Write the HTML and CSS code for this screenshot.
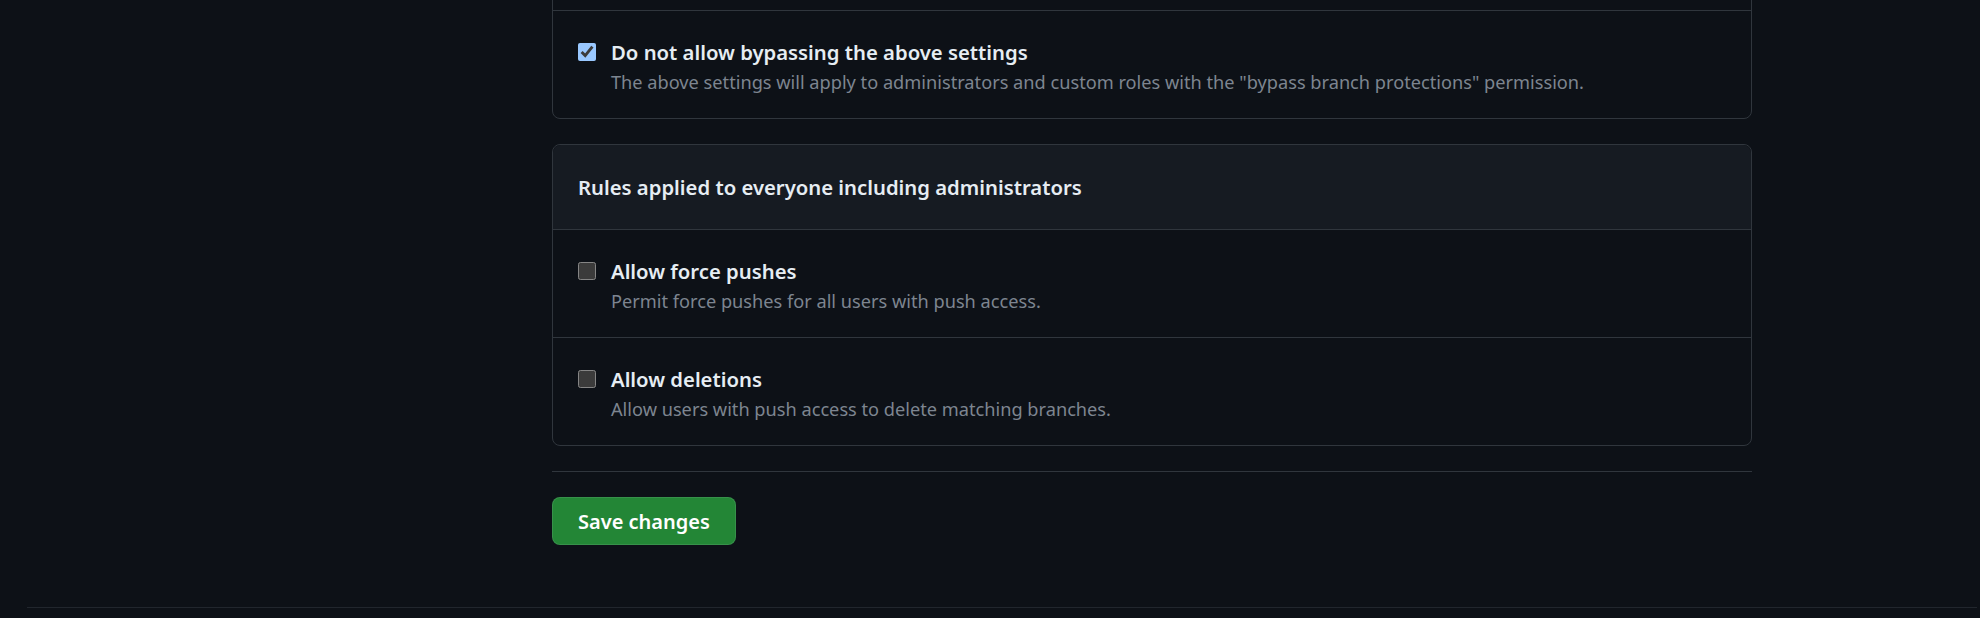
FILE: index.html
```html
<!DOCTYPE html>
<html lang="en">
<head>
<meta charset="utf-8">
<title>Branch protection rule</title>
<link rel="stylesheet" href="styles.css">
</head>
<body>
<div class="layout">
  <aside class="sidebar"></aside>
  <main class="main">
    <section class="box">
      <div class="box-row box-row-prev"></div>
      <div class="box-row">
        <label class="check">
          <input class="check-input" type="checkbox" checked>
          <span class="check-body">
            <span class="check-title">Do not allow bypassing the above settings</span>
            <span class="note">The above settings will apply to administrators and custom roles with the "bypass branch protections" permission.</span>
          </span>
        </label>
      </div>
    </section>

    <section class="box box-spaced">
      <div class="box-header">Rules applied to everyone including administrators</div>
      <div class="box-row">
        <label class="check">
          <input class="check-input" type="checkbox">
          <span class="check-body">
            <span class="check-title">Allow force pushes</span>
            <span class="note">Permit force pushes for all users with push access.</span>
          </span>
        </label>
      </div>
      <div class="box-row">
        <label class="check">
          <input class="check-input" type="checkbox">
          <span class="check-body">
            <span class="check-title">Allow deletions</span>
            <span class="note">Allow users with push access to delete matching branches.</span>
          </span>
        </label>
      </div>
    </section>

    <hr class="divider">
    <button class="btn-primary" type="button">Save changes</button>
  </main>
</div>
<footer class="footer"></footer>
</body>
</html>
```

FILE: styles.css
```css
html, body {
  margin: 0;
  padding: 0;
  background: #0d1117;
  color-scheme: dark;
}

body {
  font-family: "Noto Sans", "Open Sans", sans-serif;
  color: #e6edf3;
  overflow: hidden;
}

.layout {
  display: grid;
  grid-template-columns: 528px 1200px;
  column-gap: 24px;
  margin-top: -51px;
}

.main {
  display: flex;
  flex-direction: column;
  align-items: flex-start;
}

.box {
  align-self: stretch;
  border: 1px solid #30363d;
  border-radius: 8px;
}

.box-spaced {
  margin-top: 25px;
}

.box-header {
  height: 84px;
  display: flex;
  align-items: center;
  padding: 0 25px;
  background: #161b22;
  border-bottom: 1px solid #30363d;
  border-radius: 8px 8px 0 0;
  font-size: 20.3px;
  font-weight: 600;
  color: #e6edf3;
}

.box-row {
  padding: 27px 25px 24px;
  border-top: 1px solid #30363d;
}

.box-row:first-child {
  border-top: 0;
}

.box-header + .box-row {
  border-top: 0;
}

.box-row-prev {
  height: 60px;
  padding: 0;
}

.check {
  display: flex;
  align-items: flex-start;
  gap: 15px;
}

.check-input {
  width: 18px;
  height: 18px;
  margin: 5px 0 0;
  flex: none;
}

.check-body {
  display: flex;
  flex-direction: column;
  gap: 4px;
}

.check-title {
  font-size: 20.3px;
  line-height: 28px;
  font-weight: 600;
  color: #e6edf3;
}

.note {
  font-size: 18.2px;
  line-height: 24px;
  color: #7d8590;
}

.divider {
  align-self: stretch;
  margin: 25px 0 0;
  border: 0;
  border-top: 1px solid #30363d;
  height: 0;
}

.btn-primary {
  margin-top: 25px;
  height: 48px;
  padding: 0 25px;
  background: #238636;
  border: 1px solid rgba(240, 246, 252, 0.1);
  border-radius: 8px;
  color: #ffffff;
  font-family: "Noto Sans", "Open Sans", sans-serif;
  font-size: 20px;
  font-weight: 600;
  cursor: pointer;
}

.footer {
  margin: 62px 3px 0 27px;
  border-top: 1px solid #21262d;
  height: 20px;
}
```
